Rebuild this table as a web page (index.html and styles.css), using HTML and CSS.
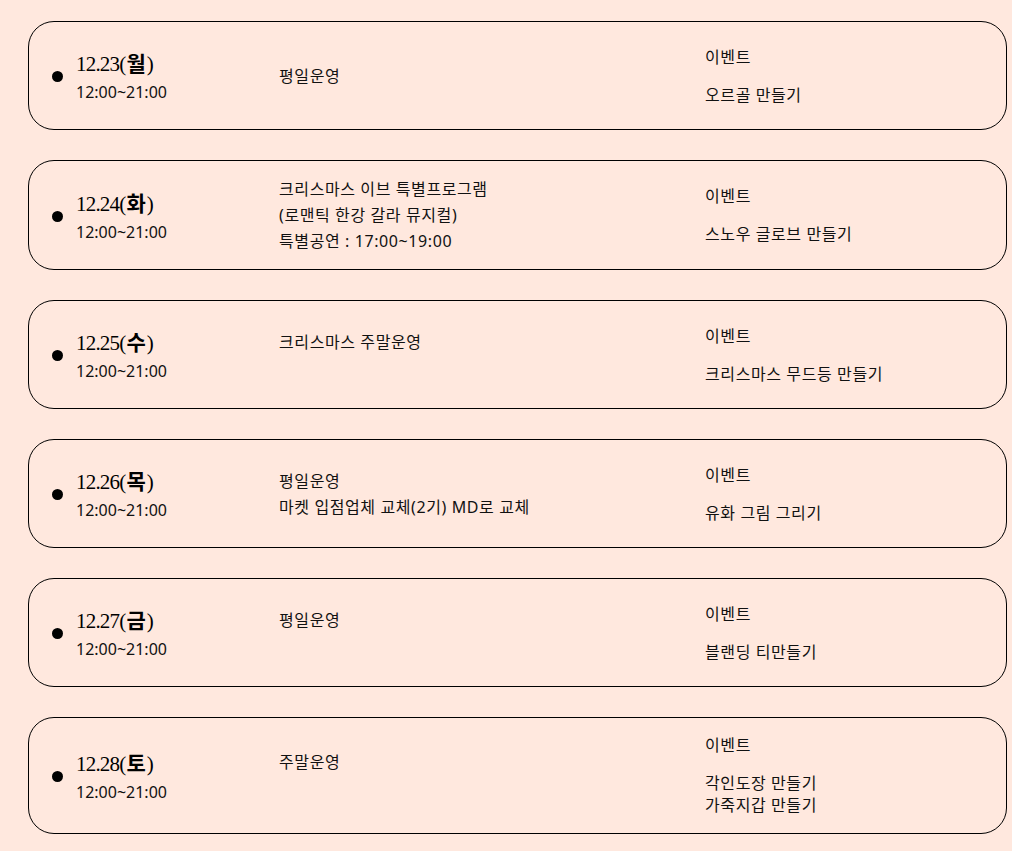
FILE: index.html
```html
<!DOCTYPE html>
<html lang="ko">
<head>
<meta charset="utf-8">
<link rel="stylesheet" href="styles.css">
</head>
<body>
<div class="list">
  <div class="card">
    <div class="when"><span class="dot"></span><div><div class="date">12.23(<b>월</b>)</div><div class="time">12:00~21:00</div></div></div>
    <div class="desc"><p>평일운영</p></div>
    <div class="event"><p class="label">이벤트</p><p>오르골 만들기</p></div>
  </div>
  <div class="card">
    <div class="when"><span class="dot"></span><div><div class="date">12.24(<b>화</b>)</div><div class="time">12:00~21:00</div></div></div>
    <div class="desc"><p>크리스마스 이브 특별프로그램</p><p>(로맨틱 한강 갈라 뮤지컬)</p><p>특별공연 : 17:00~19:00</p></div>
    <div class="event"><p class="label">이벤트</p><p>스노우 글로브 만들기</p></div>
  </div>
  <div class="card">
    <div class="when"><span class="dot"></span><div><div class="date">12.25(<b>수</b>)</div><div class="time">12:00~21:00</div></div></div>
    <div class="desc"><p>크리스마스 주말운영</p><p>&nbsp;</p></div>
    <div class="event"><p class="label">이벤트</p><p>크리스마스 무드등 만들기</p></div>
  </div>
  <div class="card">
    <div class="when"><span class="dot"></span><div><div class="date">12.26(<b>목</b>)</div><div class="time">12:00~21:00</div></div></div>
    <div class="desc"><p>평일운영</p><p>마켓 입점업체 교체(2기) MD로 교체</p></div>
    <div class="event"><p class="label">이벤트</p><p>유화 그림 그리기</p></div>
  </div>
  <div class="card">
    <div class="when"><span class="dot"></span><div><div class="date">12.27(<b>금</b>)</div><div class="time">12:00~21:00</div></div></div>
    <div class="desc"><p>평일운영</p><p>&nbsp;</p></div>
    <div class="event"><p class="label">이벤트</p><p>블랜딩 티만들기</p></div>
  </div>
  <div class="card">
    <div class="when"><span class="dot"></span><div><div class="date">12.28(<b>토</b>)</div><div class="time">12:00~21:00</div></div></div>
    <div class="desc"><p>주말운영</p><p>&nbsp;</p></div>
    <div class="event"><p class="label">이벤트</p><p>각인도장 만들기<br>가죽지갑 만들기</p></div>
  </div>
</div>
</body>
</html>
```
FILE: styles.css
```css
html, body {
  margin: 0;
  padding: 0;
  background: #ffe8de;
}
body {
  font-family: "Noto Sans", "Noto Sans CJK KR", sans-serif;
  color: #111;
}
.list {
  display: flex;
  flex-direction: column;
  gap: 30px;
  padding: 21px 5px 18px 28px;
}
.card {
  display: grid;
  grid-template-columns: 227px 426px 1fr;
  align-items: center;
  min-height: 109px;
  box-sizing: border-box;
  padding: 15px 0 15px 23px;
  border: 1px solid #000;
  border-radius: 26px;
}
.card:last-child {
  padding-top: 16px;
  padding-bottom: 17px;
}
.card p {
  margin: 0;
}
.when {
  display: flex;
  align-items: center;
  gap: 13px;
}
.dot {
  width: 11px;
  height: 11px;
  border-radius: 50%;
  background: #000;
  flex: none;
  margin-top: 2px;
}
.date {
  font-family: "Liberation Serif", serif;
  font-size: 21px;
  line-height: 28px;
  letter-spacing: -0.8px;
  color: #000;
  margin-bottom: 3px;
}
.date b {
  font-family: "Noto Sans CJK KR", sans-serif;
  font-weight: 700;
  font-size: 21px;
  letter-spacing: 0;
  margin: 0 1px;
}
.time {
  font-size: 16px;
  line-height: 22px;
  color: #111;
}
.desc {
  font-size: 16px;
  line-height: 26px;
  letter-spacing: 0.6px;
}
.event {
  font-size: 16px;
  line-height: 22px;
  letter-spacing: 0.6px;
}
.event .label {
  margin-bottom: 16px;
}
```
